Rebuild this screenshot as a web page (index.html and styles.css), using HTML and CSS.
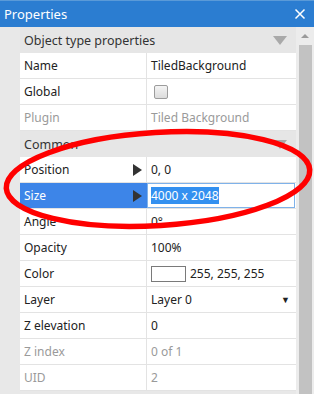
FILE: index.html
```html
<!DOCTYPE html>
<html>
<head>
<meta charset="utf-8">
<link rel="stylesheet" href="styles.css">
</head>
<body>
<div class="panel">
  <div class="titlebar">
    <span class="title">Properties</span>
    <svg class="close" width="12" height="12" viewBox="0 0 12 12"><path d="M1.5 1.5 L10.5 10.5 M10.5 1.5 L1.5 10.5" stroke="#fff" stroke-width="1.5" fill="none"/></svg>
  </div>
  <div class="body">
    <div class="gutter"></div>
    <div class="grid">
      <div class="section"><span>Object type properties</span><i class="collapse"></i></div>
      <div class="row"><div class="name">Name</div><div class="val">TiledBackground</div></div>
      <div class="row"><div class="name">Global</div><div class="val"><span class="check"></span></div></div>
      <div class="row dis"><div class="name">Plugin</div><div class="val">Tiled Background</div></div>
      <div class="section"><span>Common</span><i class="collapse"></i></div>
      <div class="row"><div class="name">Position<i class="expand"></i></div><div class="val">0, 0</div></div>
      <div class="row sel"><div class="name">Size<i class="expand"></i></div><div class="val edit"><span class="hl">4000 x 2048</span></div></div>
      <div class="row"><div class="name">Angle</div><div class="val">0°</div></div>
      <div class="row"><div class="name">Opacity</div><div class="val">100%</div></div>
      <div class="row"><div class="name">Color</div><div class="val"><span class="swatch"></span>255, 255, 255</div></div>
      <div class="row"><div class="name">Layer</div><div class="val layer">Layer 0<span class="dd">▼</span></div></div>
      <div class="row"><div class="name">Z elevation</div><div class="val">0</div></div>
      <div class="row dis"><div class="name">Z index</div><div class="val">0 of 1</div></div>
      <div class="row dis"><div class="name">UID</div><div class="val">2</div></div>
    </div>
    <div class="scroll">
      <i class="up"></i>
      <div class="thumb"></div>
    </div>
  </div>
  <svg class="mark" width="314" height="394" viewBox="0 0 314 394">
    <ellipse cx="158" cy="179" rx="152" ry="46.5" transform="rotate(-3.5 158 179)" fill="none" stroke="#f00" stroke-width="5.5"/>
  </svg>
</div>
</body>
</html>
```

FILE: styles.css
```css
* { box-sizing: border-box; }
html, body { margin: 0; padding: 0; }
body {
  width: 314px;
  height: 394px;
  overflow: hidden;
  font-family: "Noto Sans", "Open Sans", sans-serif;
  font-size: 12px;
  color: #222;
  background: #e8e8e8;
}
.panel { position: relative; width: 314px; height: 394px; }
.titlebar {
  height: 27px;
  background: #2b7dd1;
  border-top: 1px solid #5a9ad8;
  display: flex;
  align-items: center;
  justify-content: space-between;
  padding: 0 8px 0 4px;
  color: #fff;
}
.title { font-size: 13px; }
.close { display: block; }
.body { display: flex; height: 367px; }
.gutter { width: 20px; flex: none; }
.grid { width: 276px; flex: none; display: flex; flex-direction: column; }
.section {
  height: 26px;
  display: flex;
  align-items: center;
  justify-content: space-between;
  padding: 0 9px 0 4px;
  background: #e6e6e6;
  font-size: 12.5px;
  color: #333;
}
.collapse {
  width: 0; height: 0;
  border-left: 7px solid transparent;
  border-right: 7px solid transparent;
  border-top: 9px solid #a9a9a9;
}
.row {
  height: 26px;
  display: grid;
  grid-template-columns: 127px 1fr;
  background: #fff;
  border-bottom: 1px solid #e3e3e3;
}
.name {
  display: flex;
  align-items: center;
  justify-content: space-between;
  padding: 0 4px 0 4px;
  border-right: 1px solid #e3e3e3;
}
.val { display: flex; align-items: center; padding: 0 4px; }
.dis { color: #9a9a9a; }
.expand {
  width: 0; height: 0;
  border-top: 6px solid transparent;
  border-bottom: 6px solid transparent;
  border-left: 9px solid #333;
}
.sel .name { background: #3d85e8; color: #fff; border-right-color: #3d85e8; }
.edit { border: 1px solid #7fb2ea; margin: 0 1px 0 0; padding-left: 3px; }
.hl { background: #3390f0; color: #fff; }
.check {
  width: 14px; height: 14px;
  margin-left: 3px;
  border: 1px solid #9c9c9c;
  border-radius: 2px;
  background: linear-gradient(#f4f4f4, #dcdcdc);
}
.swatch {
  width: 35px; height: 16px;
  border: 1px solid #7a7a7a;
  background: #fff;
  margin-right: 4px;
}
.layer { justify-content: space-between; padding-right: 6px; }
.dd { font-size: 9px; color: #222; }
.scroll {
  width: 18px;
  flex: none;
  background: #ececec;
  display: flex;
  flex-direction: column;
  align-items: center;
  padding-top: 7px;
}
.up {
  width: 0; height: 0;
  border-left: 4px solid transparent;
  border-right: 4px solid transparent;
  border-bottom: 4px solid #9a9a9a;
}
.thumb { width: 13px; flex: 1; margin-top: 7px; background: #c2c2c2; margin-left: 1px; }
.mark { position: absolute; left: 0; top: 0; pointer-events: none; }
```
